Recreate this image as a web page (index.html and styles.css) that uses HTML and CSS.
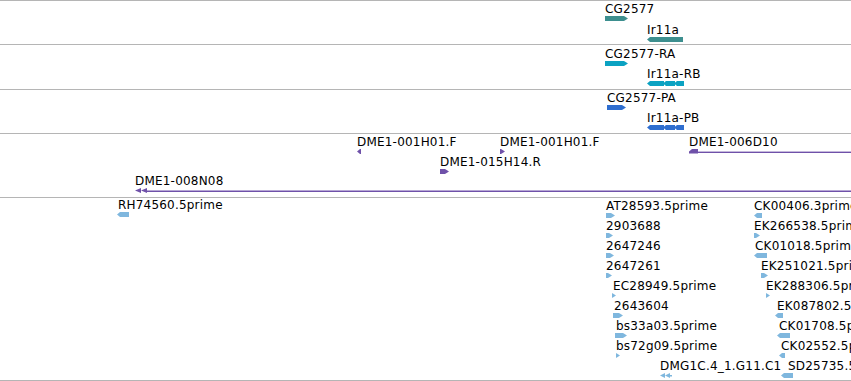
FILE: index.html
```html
<!DOCTYPE html>
<html>
<head>
    <meta charset="UTF-8">
    <title>Tracks</title>
    <link rel="stylesheet" href="styles.css">
</head>
<body>
    <div class="panel">
        <div class="track genes" id="genes"></div>
        <div class="track transcripts" id="transcripts"></div>
        <div class="track proteins" id="proteins"></div>
        <div class="track clones" id="clones"></div>
        <div class="track ests" id="ests"></div>
    </div>
    <script type="text/javascript">
        // page y of the first pixel inside each track
        let trackTops = {"genes": 1, "transcripts": 45, "proteins": 90, "clones": 134, "ests": 198};

        // label x, glyph x, glyph top (page y), glyph width, shape
        let features = [
            {"track": "genes", "name": "CG2577", "lx": 605, "gx": 605, "gy": 16, "w": 23, "shape": "right"},
            {"track": "genes", "name": "Ir11a", "lx": 647, "gx": 647, "gy": 37, "w": 36, "shape": "left"},
            {"track": "transcripts", "name": "CG2577-RA", "lx": 605, "gx": 605, "gy": 61, "w": 23, "shape": "right"},
            {"track": "transcripts", "name": "Ir11a-RB", "lx": 647, "gx": 647, "gy": 81, "w": 37, "shape": "exons"},
            {"track": "proteins", "name": "CG2577-PA", "lx": 607, "gx": 607, "gy": 105, "w": 19, "shape": "right"},
            {"track": "proteins", "name": "Ir11a-PB", "lx": 647, "gx": 647, "gy": 125, "w": 37, "shape": "exons"},
            {"track": "clones", "name": "DME1-001H01.F", "lx": 357, "gx": 357, "gy": 149, "w": 4, "shape": "left"},
            {"track": "clones", "name": "DME1-001H01.F", "lx": 500, "gx": 500, "gy": 149, "w": 5, "shape": "right"},
            {"track": "clones", "name": "DME1-015H14.R", "lx": 440, "gx": 440, "gy": 169, "w": 9, "shape": "right"},
            {"track": "clones", "name": "DME1-006D10", "lx": 689, "gx": 689, "gy": 149, "w": 200, "shape": "leftline"},
            {"track": "clones", "name": "DME1-008N08", "lx": 135, "gx": 135, "gy": 188, "w": 760, "shape": "doubleline"},
            {"track": "ests", "name": "RH74560.5prime", "lx": 118, "gx": 117, "gy": 212, "w": 12, "shape": "left"},
            {"track": "ests", "name": "AT28593.5prime", "lx": 606, "gx": 606, "gy": 213, "w": 9, "shape": "right"},
            {"track": "ests", "name": "2903688", "lx": 606, "gx": 606, "gy": 233, "w": 7, "shape": "right"},
            {"track": "ests", "name": "2647246", "lx": 606, "gx": 606, "gy": 253, "w": 8, "shape": "right"},
            {"track": "ests", "name": "2647261", "lx": 606, "gx": 606, "gy": 273, "w": 6, "shape": "right"},
            {"track": "ests", "name": "EC28949.5prime", "lx": 613, "gx": 612, "gy": 293, "w": 4, "shape": "right"},
            {"track": "ests", "name": "2643604", "lx": 614, "gx": 613, "gy": 313, "w": 10, "shape": "right"},
            {"track": "ests", "name": "bs33a03.5prime", "lx": 616, "gx": 615, "gy": 333, "w": 12, "shape": "right"},
            {"track": "ests", "name": "bs72g09.5prime", "lx": 616, "gx": 616, "gy": 353, "w": 4, "shape": "right"},
            {"track": "ests", "name": "DMG1C.4_1.G11.C1", "lx": 660, "gx": 660, "gy": 373, "w": 12, "shape": "double"},
            {"track": "ests", "name": "CK00406.3prime", "lx": 754, "gx": 754, "gy": 213, "w": 8, "shape": "left"},
            {"track": "ests", "name": "EK266538.5prime", "lx": 754, "gx": 754, "gy": 233, "w": 6, "shape": "right"},
            {"track": "ests", "name": "CK01018.5prime", "lx": 755, "gx": 754, "gy": 253, "w": 13, "shape": "left"},
            {"track": "ests", "name": "EK251021.5prime", "lx": 761, "gx": 761, "gy": 273, "w": 7, "shape": "right"},
            {"track": "ests", "name": "EK288306.5prime", "lx": 766, "gx": 766, "gy": 293, "w": 4, "shape": "right"},
            {"track": "ests", "name": "EK087802.5prime", "lx": 777, "gx": 775, "gy": 313, "w": 8, "shape": "left"},
            {"track": "ests", "name": "CK01708.5prime", "lx": 779, "gx": 777, "gy": 333, "w": 13, "shape": "left"},
            {"track": "ests", "name": "CK02552.5prime", "lx": 781, "gx": 779, "gy": 353, "w": 6, "shape": "left"},
            {"track": "ests", "name": "SD25735.5prime", "lx": 788, "gx": 781, "gy": 373, "w": 12, "shape": "left"}
        ];

        function leftArrow(x, w) {
            let tip = Math.min(3, w);
            return `<polygon points="${x},2.5 ${x + tip},0 ${x + w},0 ${x + w},5 ${x + tip},5"/>`;
        }

        function glyphSvg(f) {
            let w = f.w;
            let body = "";
            if (f.shape === "right") {
                let tip = Math.min(4, w);
                body = `<polygon points="0,0 ${w - tip},0 ${w},2.5 ${w - tip},5 0,5"/>`;
            } else if (f.shape === "left") {
                body = leftArrow(0, w);
            } else if (f.shape === "exons") {
                body = leftArrow(0, 17) + leftArrow(16, 12) + leftArrow(27, 10);
            } else if (f.shape === "double") {
                body = `<polygon points="0,2.5 5,0 5,5"/><polygon points="5,2.5 10,0 10,5"/><rect x="9" y="2" width="${w - 9}" height="1.5"/>`;
            } else if (f.shape === "doubleline") {
                body = `<polygon points="0,2.5 6,0 6,5"/><polygon points="6,2.5 12,0 12,5"/><rect x="11" y="2.5" width="${w - 11}" height="1.5"/>`;
            } else if (f.shape === "leftline") {
                body = `<polygon points="0,2.5 3,0 9,0 9,4.5 0,4.5"/><rect x="9" y="2.6" width="${w - 9}" height="1.4"/>`;
            }
            return `<svg width="${w}" height="5" viewBox="0 0 ${w} 5">${body}</svg>`;
        }

        for (let i = 0; i < features.length; i++) {
            let f = features[i];
            let top = trackTops[f.track];
            let track = document.getElementById(f.track);

            let label = document.createElement("div");
            label.className = "label";
            label.textContent = f.name;
            label.style.left = f.lx + "px";
            label.style.top = (f.gy - 14 - top) + "px";
            track.appendChild(label);

            let glyph = document.createElement("div");
            glyph.className = "glyph";
            glyph.innerHTML = glyphSvg(f);
            glyph.style.left = f.gx + "px";
            glyph.style.top = (f.gy - top) + "px";
            track.appendChild(glyph);
        }
    </script>
</body>
</html>
```

FILE: styles.css
```css
body {
    margin: 0;
    background-color: white;
    overflow: hidden;
    font-family: "DejaVu Sans", sans-serif;
}
.panel {
    width: 851px;
    border-top: 1px solid #b5b5b5;
}
.track {
    position: relative;
    overflow: hidden;
    border-bottom: 1px solid #b5b5b5;
}
.genes {
    height: 43px;
}
.transcripts {
    height: 44px;
}
.proteins {
    height: 43px;
}
.clones {
    height: 63px;
}
.ests {
    height: 182px;
}
.label {
    position: absolute;
    font-size: 12px;
    line-height: 14px;
    letter-spacing: 0.2px;
    color: black;
    white-space: nowrap;
}
.glyph {
    position: absolute;
    height: 5px;
    line-height: 0;
}
.glyph svg {
    display: block;
}
.genes svg {
    fill: #3d8f8f;
}
.transcripts svg {
    fill: #0ba2c2;
}
.proteins svg {
    fill: #2f6ecf;
}
.clones svg {
    fill: #6f51a9;
}
.ests svg {
    fill: #7fb7de;
}
```
